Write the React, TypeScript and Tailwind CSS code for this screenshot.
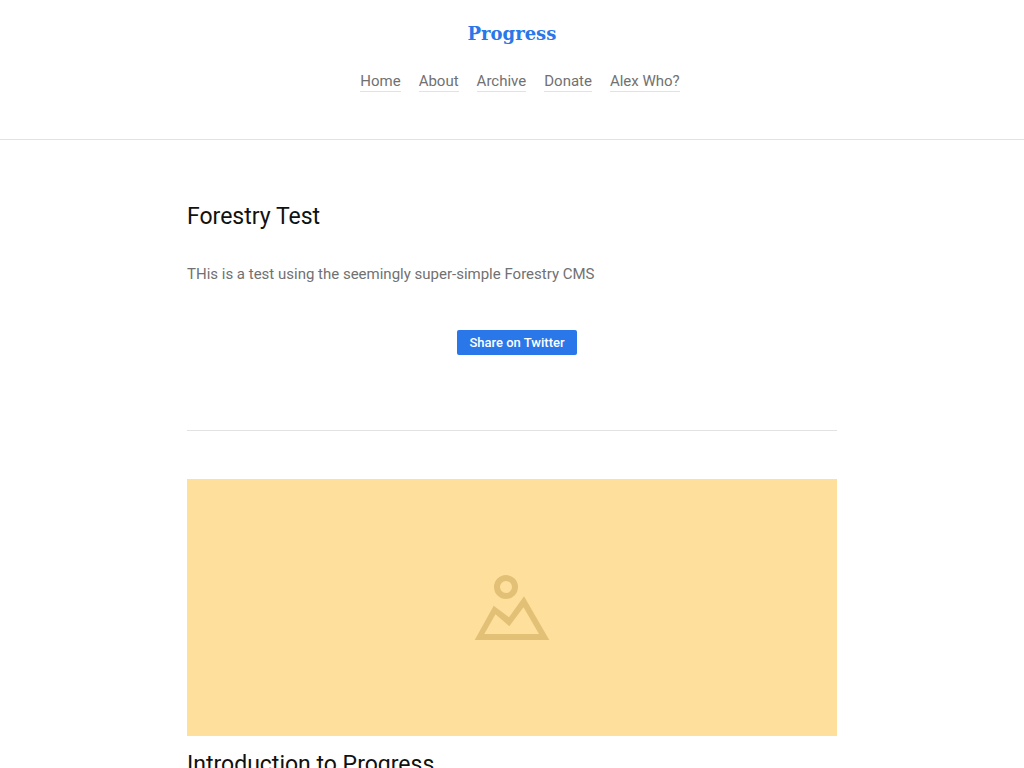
const links = ['Home', 'About', 'Archive', 'Donate', 'Alex Who?'];

function Picture() {
  return (
    <div className="mt-12 flex h-[257px] items-center justify-center bg-[#fedf9b]">
      <svg width="76" height="65" viewBox="0 0.5 76 65" role="img" aria-label="Placeholder image">
        <circle cx="32" cy="12.5" r="9" fill="none" stroke="#e2c176" strokeWidth="6" />
        <path
          fill="#e2c176"
          fillRule="evenodd"
          d="M.7 65.5 19.7 31.2 35 42.8 50 21.8 75.3 65.5ZM10.3 59.5H65L49.5 32.8 35.3 51.8 21.5 39.8Z"
        />
      </svg>
    </div>
  );
}

export default function App() {
  return (
    <div className="min-h-screen bg-white font-[Roboto,sans-serif] text-[15px] leading-6 text-[#717171]">
      <header className="flex flex-col items-center border-b border-[#e2e2e2] pt-5 pb-[47px]">
        <a
          href="#"
          className="font-['DejaVu_Serif',serif] text-lg leading-7 font-bold text-[#2977e9]"
        >
          Progress
        </a>
        <nav className="mt-6 flex gap-[18px] pl-4 leading-[19px]">
          {links.map((label) => (
            <a key={label} href="#" className="border-b border-[#e2e2e2]">
              {label}
            </a>
          ))}
        </nav>
      </header>
      <main className="mx-auto max-w-[650px] pt-[61px]">
        <article className="border-b border-[#e2e2e2] pb-[75px]">
          <h2 className="text-[23px] leading-8 text-[#111111]">Forestry Test</h2>
          <p className="mt-[29px]">THis is a test using the seemingly super-simple Forestry CMS</p>
          <div className="mt-11 flex justify-center pl-[10px]">
            <a
              href="#"
              className="flex h-[25px] w-[120px] items-center justify-center rounded-xs bg-[#2977e9] text-[13px] font-medium text-white"
            >
              Share on Twitter
            </a>
          </div>
        </article>
        <article>
          <Picture />
          <h2 className="mt-[13px] text-[23px] leading-8 text-[#111111]">Introduction to Progress</h2>
        </article>
      </main>
    </div>
  );
}
